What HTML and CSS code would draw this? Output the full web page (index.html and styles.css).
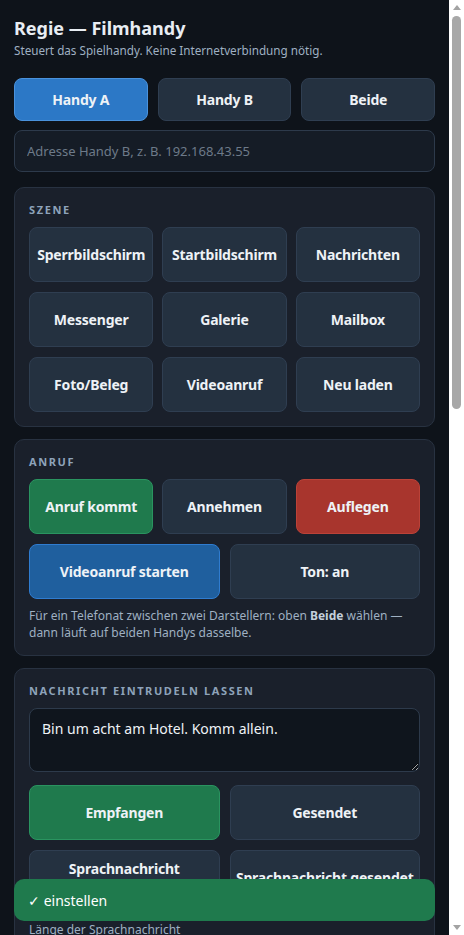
FILE: index.html
```html
<!DOCTYPE html>
<html lang="de">

<head>
    <meta charset="UTF-8">
    <meta name="viewport" content="width=device-width, initial-scale=1.0">
    <title>Regie — Filmhandy</title>
    <link rel="stylesheet" href="styles.css">
</head>

<body>
    <header class="top">
        <h1>Regie — Filmhandy</h1>
        <p class="sub">Steuert das Spielhandy. Keine Internetverbindung nötig.</p>
    </header>

    <div class="targets">
        <button class="btn target active">Handy A</button>
        <button class="btn target">Handy B</button>
        <button class="btn target">Beide</button>
    </div>
    <input class="addr" type="text" placeholder="Adresse Handy B, z. B. 192.168.43.55">

    <section class="card">
        <h2>Szene</h2>
        <div class="grid three">
            <button class="btn">Sperrbildschirm</button>
            <button class="btn">Startbildschirm</button>
            <button class="btn">Nachrichten</button>
            <button class="btn">Messenger</button>
            <button class="btn">Galerie</button>
            <button class="btn">Mailbox</button>
            <button class="btn">Foto/Beleg</button>
            <button class="btn">Videoanruf</button>
            <button class="btn">Neu laden</button>
        </div>
    </section>

    <section class="card">
        <h2>Anruf</h2>
        <div class="grid three">
            <button class="btn green">Anruf kommt</button>
            <button class="btn">Annehmen</button>
            <button class="btn red">Auflegen</button>
        </div>
        <div class="grid two">
            <button class="btn blue">Videoanruf starten</button>
            <button class="btn">Ton: an</button>
        </div>
        <p class="hint">Für ein Telefonat zwischen zwei Darstellern: oben <b>Beide</b> wählen — dann läuft auf beiden Handys dasselbe.</p>
    </section>

    <section class="card">
        <h2>Nachricht eintrudeln lassen</h2>
        <textarea class="msg">Bin um acht am Hotel. Komm allein.</textarea>
        <div class="grid two">
            <button class="btn green">Empfangen</button>
            <button class="btn">Gesendet</button>
            <button class="btn">Sprachnachricht empfangen</button>
            <button class="btn">Sprachnachricht gesendet</button>
        </div>
        <label class="field">Länge der Sprachnachricht</label>
        <input class="addr" type="text" value="0:12">
    </section>

    <div class="toast">✓ einstellen</div>

    <!-- window scrollbar -->
    <div class="scrollbar">
        <span class="arrow up"></span>
        <span class="thumb"></span>
        <span class="arrow down"></span>
    </div>

    <script>
        const targets = document.querySelectorAll('.target');
        targets.forEach(btn => {
            btn.addEventListener('click', () => {
                targets.forEach(b => b.classList.remove('active'));
                btn.classList.add('active');
            });
        });
    </script>
</body>

</html>
```

FILE: styles.css
```css
body {
    font-family: 'Noto Sans', 'Open Sans', sans-serif;
    background-color: #0e131a;
    color: #e8edf3;
    margin: 0;
    padding: 15px 29px 40px 14px;
}

h1 {
    font-size: 18px;
    font-weight: 700;
    margin: 0;
    line-height: 26px;
}

.sub {
    margin: 1px 0 0;
    font-size: 11.7px;
    color: #9fb0c2;
}

.targets {
    display: grid;
    grid-template-columns: repeat(3, 1fr);
    gap: 10px;
    margin-top: 20px;
}

.btn {
    font-family: inherit;
    font-size: 14px;
    font-weight: 700;
    letter-spacing: -0.2px;
    color: #eef2f6;
    background-color: #243140;
    border: 1px solid #2f3e51;
    border-radius: 8px;
    cursor: pointer;
    padding: 0 2px;
    min-height: 55px;
    line-height: 18px;
}

.target {
    min-height: 43px;
}

.active {
    background-color: #2c78c6;
    border-color: #4a92dc;
}

.green {
    background-color: #1f7a4d;
    border-color: #2a9460;
}

.red {
    background-color: #a8352d;
    border-color: #bb4238;
}

.blue {
    background-color: #1f5f9e;
    border-color: #2f7cd0;
}

.addr {
    display: block;
    box-sizing: border-box;
    width: 100%;
    height: 42px;
    margin-top: 9px;
    padding: 0 12px;
    font-family: inherit;
    font-size: 13px;
    color: #e8edf3;
    background-color: #151c26;
    border: 1px solid #2d3a4b;
    border-radius: 8px;
}

.addr::placeholder {
    color: #6d7a89;
}

.card {
    background-color: #1a202b;
    border: 1px solid #283241;
    border-radius: 10px;
    padding: 14px 14px 14px;
    margin-top: 12px;
}

.addr + .card {
    margin-top: 15px;
}

.card h2 {
    margin: 0 0 10px;
    font-size: 11px;
    font-weight: 700;
    letter-spacing: 1.6px;
    text-transform: uppercase;
    color: #8ea3ba;
}

.grid {
    display: grid;
    gap: 10px 9px;
}

.grid + .grid {
    margin-top: 10px;
}

.three {
    grid-template-columns: repeat(3, 1fr);
}

.two {
    grid-template-columns: repeat(2, 1fr);
    column-gap: 10px;
}

.hint {
    margin: 8px 0 0;
    font-size: 12px;
    line-height: 17px;
    color: #9fb0c2;
}

.hint b {
    color: #c4d0dc;
}

.msg {
    display: block;
    box-sizing: border-box;
    width: 100%;
    height: 64px;
    margin-bottom: 13px;
    padding: 10px 12px;
    font-family: inherit;
    font-size: 14px;
    color: #eef2f6;
    background-color: #0f151d;
    border: 1px solid #2d3a4b;
    border-radius: 8px;
    resize: vertical;
}

.field {
    display: block;
    margin-top: 16px;
    font-size: 12px;
    color: #9fb0c2;
}

.toast {
    position: fixed;
    left: 14px;
    right: 29px;
    bottom: 14px;
    height: 42px;
    display: flex;
    align-items: center;
    padding: 0 14px;
    font-size: 14px;
    color: #ffffff;
    background-color: #1f7a4d;
    border-radius: 10px;
}

.scrollbar {
    position: fixed;
    top: 0;
    right: 0;
    bottom: 0;
    width: 15px;
    background-color: #ffffff;
    display: flex;
    flex-direction: column;
    align-items: center;
}

.arrow {
    width: 0;
    height: 0;
    border-left: 4px solid transparent;
    border-right: 4px solid transparent;
}

.arrow.up {
    margin-top: 5px;
    border-bottom: 5px solid #a3a3a3;
}

.arrow.down {
    margin-top: auto;
    margin-bottom: 5px;
    border-top: 5px solid #a3a3a3;
}

.thumb {
    width: 9px;
    height: 393px;
    margin-top: 6px;
    background-color: #a8a8a8;
    border-radius: 5px;
}
```
